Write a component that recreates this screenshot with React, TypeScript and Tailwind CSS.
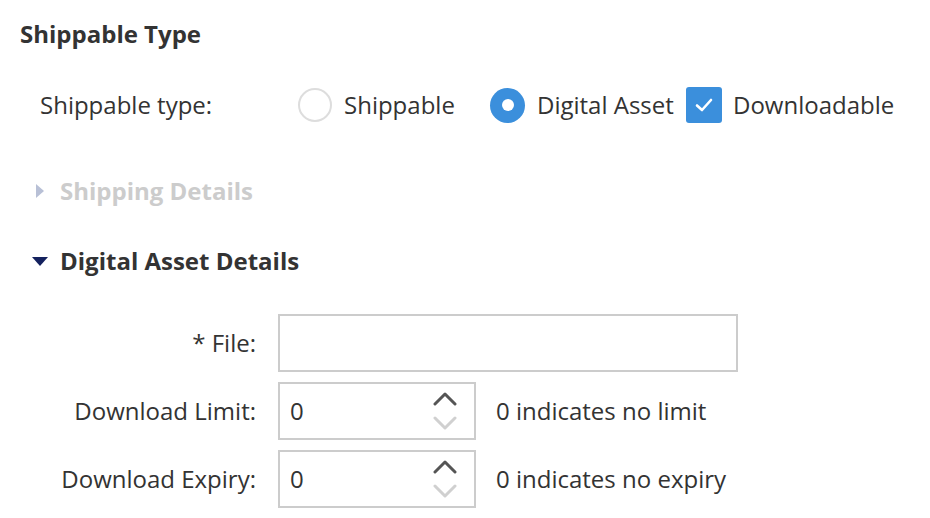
import React from "react";

function Chevron({ up, color }: { up: boolean; color: string }) {
  return (
    <svg width="24" height="14" viewBox="0 0 24 14" fill="none">
      <path
        d={up ? "M2 12 L12 2 L22 12" : "M2 2 L12 12 L22 2"}
        stroke={color}
        strokeWidth="3"
        strokeLinecap="round"
        strokeLinejoin="round"
      />
    </svg>
  );
}

function NumberField({ help }: { help: string }) {
  return (
    <div className="flex items-center">
      <div className="relative flex h-[58px] w-[198px] items-center border-2 border-[#cccccc] bg-white pl-[10px]">
        <span className="text-[24px] leading-none text-[#333333]">0</span>
        <div className="absolute right-[17px] top-[8px] flex flex-col items-center gap-[10px]">
          <Chevron up color="#555555" />
          <Chevron up={false} color="#d0d0d0" />
        </div>
      </div>
      <span className="ml-[20px] text-[24px] text-[#333333]">{help}</span>
    </div>
  );
}

export default function App() {
  return (
    <div
      className="min-h-[518px] w-[930px] bg-white pl-5 pt-[19px] text-[#333333]"
      style={{ fontFamily: '"Open Sans", "Noto Sans", sans-serif' }}
    >
      <h2 className="text-[24px] font-bold leading-[30px]">Shippable Type</h2>

      <div className="mt-[39px] flex h-[34px] items-center pl-5 text-[24px] leading-[30px]">
        <span className="w-[258px]">Shippable type:</span>
        <span className="h-[34px] w-[34px] rounded-full border-2 border-[#dddddd] bg-white" />
        <span className="ml-[12px] w-[146px]">Shippable</span>
        <span className="flex h-[35px] w-[35px] items-center justify-center rounded-full bg-[#3b8fdc]">
          <span className="h-[12px] w-[12px] rounded-full bg-white" />
        </span>
        <span className="ml-[12px] w-[149px] whitespace-nowrap">Digital Asset</span>
        <span className="flex h-[36px] w-[36px] items-center justify-center rounded-[3px] bg-[#3b8fdc]">
          <svg width="20" height="16" viewBox="0 0 20 16" fill="none">
            <path d="M3 8.5 L8 13 L17 3" stroke="white" strokeWidth="2.6" strokeLinecap="round" strokeLinejoin="round" />
          </svg>
        </span>
        <span className="ml-[11px]">Downloadable</span>
      </div>

      <div className="mt-[54px] flex h-[30px] items-center">
        <svg className="ml-[16px]" width="8" height="14" viewBox="0 0 8 14">
          <path d="M0 0 L8 7 L0 14 Z" fill="#b8c0d6" />
        </svg>
        <span className="ml-[16px] text-[24px] font-bold leading-[30px] text-[#cccccc]">Shipping Details</span>
      </div>

      <div className="mt-[40px] flex h-[30px] items-center">
        <svg className="ml-[12px]" width="16" height="9" viewBox="0 0 16 9">
          <path d="M0 0 L16 0 L8 9 Z" fill="#14215e" />
        </svg>
        <span className="ml-[12px] text-[24px] font-bold leading-[30px] text-[#333333]">Digital Asset Details</span>
      </div>

      <div className="mt-[38px] grid grid-cols-[236px_auto] items-center gap-x-[22px] gap-y-[10px] text-[24px]">
        <span className="whitespace-nowrap text-right">* File:</span>
        <div className="h-[58px] w-[460px] border-2 border-[#cccccc] bg-white" />
        <span className="whitespace-nowrap text-right">Download Limit:</span>
        <NumberField help="0 indicates no limit" />
        <span className="whitespace-nowrap text-right">Download Expiry:</span>
        <NumberField help="0 indicates no expiry" />
      </div>
    </div>
  );
}
